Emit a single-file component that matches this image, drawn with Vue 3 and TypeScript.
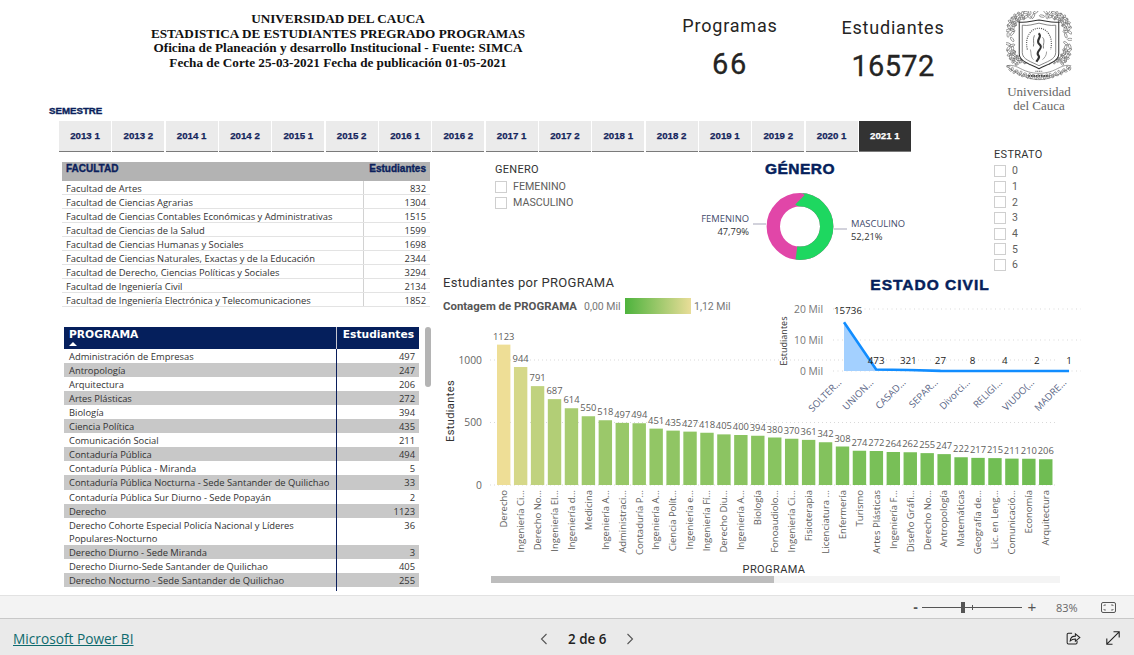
<script setup lang="ts">
const semesters = ["2013 1","2013 2","2014 1","2014 2","2015 1","2015 2","2016 1","2016 2","2017 1","2017 2","2018 1","2018 2","2019 1","2019 2","2020 1","2021 1"];

const faculties = [
  ["Facultad de Artes", 832],
  ["Facultad de Ciencias Agrarias", 1304],
  ["Facultad de Ciencias Contables Económicas y Administrativas", 1515],
  ["Facultad de Ciencias de la Salud", 1599],
  ["Facultad de Ciencias Humanas y Sociales", 1698],
  ["Facultad de Ciencias Naturales, Exactas y de la Educación", 2344],
  ["Facultad de Derecho, Ciencias Políticas y Sociales", 3294],
  ["Facultad de Ingeniería Civil", 2134],
  ["Facultad de Ingeniería Electrónica y Telecomunicaciones", 1852],
];

const programs = [
  ["Administración de Empresas", 497],
  ["Antropología", 247],
  ["Arquitectura", 206],
  ["Artes Plásticas", 272],
  ["Biología", 394],
  ["Ciencia Política", 435],
  ["Comunicación Social", 211],
  ["Contaduría Pública", 494],
  ["Contaduría Pública - Miranda", 5],
  ["Contaduría Pública Nocturna - Sede Santander de Quilichao", 33],
  ["Contaduría Pública Sur Diurno - Sede Popayán", 2],
  ["Derecho", 1123],
  ["Derecho Cohorte Especial Policía Nacional y Líderes Populares-Nocturno", 36],
  ["Derecho Diurno - Sede Miranda", 3],
  ["Derecho Diurno-Sede Santander de Quilichao", 405],
  ["Derecho Nocturno - Sede Santander de Quilichao", 255],
];

const barData: [string, number][] = [
  ["Derecho", 1123],["Ingeniería Ci...", 944],["Derecho No...", 791],["Ingeniería El...", 687],
  ["Ingeniería d...", 614],["Medicina", 550],["Ingeniería A...", 518],["Administraci...", 497],
  ["Contaduría P...", 494],["Ingeniería A...", 451],["Ciencia Polít...", 435],["Ingeniería e...", 427],
  ["Ingeniería Fí...", 418],["Derecho Diu...", 405],["Ingeniería A...", 400],["Biología", 394],
  ["Fonoaudiolo...", 380],["Ingeniería Ci...", 370],["Fisioterapia", 361],["Licenciatura ...", 342],
  ["Enfermería", 308],["Turismo", 274],["Artes Plásticas", 272],["Ingeniería F...", 264],
  ["Diseño Gráfi...", 262],["Derecho No...", 255],["Antropología", 247],["Matemáticas", 222],
  ["Geografía de...", 217],["Lic. en Leng...", 215],["Comunicació...", 211],["Economía", 210],["Arquitectura", 206],
];

function barColor(v: number) {
  const t = v / 1123;
  const a = [84, 182, 68];
  const b = [238, 222, 150];
  const c = a.map((x, i) => Math.round(x + (b[i] - x) * t));
  return `rgb(${c[0]},${c[1]},${c[2]})`;
}

const bars = barData.map(([label, value], i) => ({
  label,
  value,
  x: 57 + i * 16.94,
  h: value * 0.125,
  color: barColor(value),
}));

const civil: [string, number][] = [
  ["SOLTER...", 15736],["UNION...", 473],["CASAD...", 321],["SEPAR...", 27],
  ["Divorci...", 8],["RELIGI...", 4],["VIUDO(...", 2],["MADRE...", 1],
];
const civilPts = civil.map(([label, value], i) => ({
  label,
  value,
  x: 66 + i * 32.15,
  y: 93 - value * 0.0031,
}));
const civilLine = civilPts.map((p) => `${p.x},${p.y}`).join(" ");
const civilArea = `${civilPts[0].x},93 ${civilLine} ${civilPts[7].x},93`;

const estratos = [0, 1, 2, 3, 4, 5, 6];

// leaves of the crest wreath: two squarish rings around the shield
function squarish(v: number) {
  return Math.sign(v) * Math.pow(Math.abs(v), 0.62);
}
const leaves = Array.from({ length: 110 }, (_, i) => {
  const ring = i % 2;
  const a = (i / 110) * Math.PI * 2;
  const rx = ring ? 26.5 : 30.5;
  const ry = ring ? 23 : 27;
  const x = 32.5 + rx * squarish(Math.cos(a));
  const y = 28 + ry * squarish(Math.sin(a));
  return { x, y, r: i * 37 };
}).filter((l) => l.y < 52);

const ribbon = Array.from({ length: 30 }, (_, i) => {
  const x = 2 + i * 2.1;
  const d = (x - 32.5) / 30;
  return { x, y: 65 - 9 * d * d + (i % 2) * 2.2 - 1, r: i * 47 };
});
</script>

<template>
  <div class="page">
    <main class="canvas">
      <header class="top">
        <div class="heading">
          <p>UNIVERSIDAD DEL CAUCA</p>
          <p>ESTADISTICA DE ESTUDIANTES PREGRADO PROGRAMAS</p>
          <p>Oficina de Planeación y desarrollo Institucional - Fuente: SIMCA</p>
          <p>Fecha de Corte 25-03-2021 Fecha de publicación 01-05-2021</p>
        </div>
        <div class="kpi first">
          <div class="kpi-label">Programas</div>
          <div class="kpi-value">66</div>
        </div>
        <div class="kpi second">
          <div class="kpi-label">Estudiantes</div>
          <div class="kpi-value big">16572</div>
        </div>
        <div class="logo">
          <svg width="66" height="76" viewBox="0 0 65 75" fill="none" stroke="#666">
            <ellipse
              v-for="(l, i) in leaves"
              :key="i"
              :cx="l.x"
              :cy="l.y"
              rx="2.6"
              ry="1.1"
              stroke-width=".6"
              :transform="`rotate(${l.r} ${l.x} ${l.y})`"
            />
            <path d="M13 11 C20 12 24 10 32.5 9 C41 10 45 12 52 11 V42 C52 50 42 52 32.5 57 C23 52 13 50 13 42 Z" fill="#fff" stroke="#333" stroke-width="1" />
            <path d="M16 14 C22 15 27 13 32.5 12 C38 13 43 15 49 14 V41 C49 48 40 50 32.5 54 C25 50 16 48 16 41 Z" stroke="#555" stroke-width=".7" />
            <path d="M21 38 C18 25 25 17 32.5 17 C40 17 47 25 44 38" stroke="#555" stroke-width="1.1" stroke-dasharray="1.1 1" />
            <path d="M32 22 C37 25 28 29 33 33 C38 37 28 40 32 44 C34 46 31 48 30 50" stroke="#333" stroke-width="2.1" />
            <path d="M36 26 C39 29 36 33 37 37 M28 24 C26 28 28 31 27 35" stroke="#777" stroke-width=".9" />
            <path d="M24 38 C25 42 24 45 27 48 M40 40 C40 44 38 46 36 48" stroke="#888" stroke-width=".8" />
            <path d="M1 54 C9 52 14 58 22 60 C28 62 37 62 43 60 C51 58 56 52 64 54 C60 59 54 62 48 64 C38 69 27 69 17 64 C11 62 5 59 1 54 Z" fill="#fff" stroke="#777" stroke-width=".7" />
            <ellipse
              v-for="(r, i) in ribbon"
              :key="'r' + i"
              :cx="r.x"
              :cy="r.y"
              rx="1.7"
              ry=".9"
              stroke-width=".6"
              :transform="`rotate(${r.r} ${r.x} ${r.y})`"
            />
            <path d="M22 64 H43" stroke="#444" stroke-width="1.6" stroke-dasharray="1.5 1" />
            <path d="M29 59.5 H36" stroke="#555" stroke-width="1.1" stroke-dasharray="1 .7" />
          </svg>
          <div class="logo-text">Universidad<br />del Cauca</div>
        </div>
      </header>

      <div class="semester-title">SEMESTRE</div>
      <nav class="tabs">
        <div v-for="(s, i) in semesters" :key="s" class="tab" :class="{ active: i === semesters.length - 1 }">{{ s }}</div>
      </nav>

      <section class="body">
        <div class="left">
          <div class="faculty">
            <div class="faculty-head">
              <span>FACULTAD</span>
              <span>Estudiantes</span>
            </div>
            <div v-for="f in faculties" :key="f[0]" class="faculty-row">
              <span>{{ f[0] }}</span>
              <span class="num">{{ f[1] }}</span>
            </div>
          </div>

          <div class="program-wrap">
            <div class="program">
              <div class="program-head">
                <div class="program-name-head">
                  PROGRAMA
                  <svg class="sort" width="8" height="4" viewBox="0 0 8 4"><path d="M0 4 L4 0 L8 4 Z" fill="#fff" /></svg>
                </div>
                <div class="program-num-head">Estudiantes</div>
              </div>
              <div
                v-for="(p, i) in programs"
                :key="p[0]"
                class="program-row"
                :class="{ shade: i % 2 === 1, tall: i === 9 }"
              >
                <div class="program-name">{{ p[0] }}</div>
                <div class="program-num">{{ p[1] }}</div>
              </div>
              <div class="program-rest"></div>
            </div>
            <div class="vscroll"></div>
          </div>
        </div>

        <div class="right">
          <div class="upper">
            <div class="slicer genero">
              <div class="slicer-title">GENERO</div>
              <label class="check"><i></i>FEMENINO</label>
              <label class="check"><i></i>MASCULINO</label>
            </div>

            <div class="donut">
              <div class="chart-heading">GÉNERO</div>
              <svg width="240" height="100" viewBox="0 0 240 100">
                <circle cx="120" cy="57.5" r="26.7" fill="none" stroke="#e146a8" stroke-width="13.4" />
                <circle
                  cx="120"
                  cy="57.5"
                  r="26.7"
                  fill="none"
                  stroke="#1ed760"
                  stroke-width="13.4"
                  pathLength="100"
                  stroke-dasharray="52.21 47.79"
                  transform="rotate(-90 120 57.5)"
                />
                <path d="M73 55 H86 M154 60 H167" stroke="#a5a5b8" stroke-width="1" />
                <text class="donut-label" x="69" y="53" text-anchor="end">FEMENINO</text>
                <text class="donut-pct" x="69" y="66" text-anchor="end">47,79%</text>
                <text class="donut-label" x="171" y="58">MASCULINO</text>
                <text class="donut-pct" x="171" y="71">52,21%</text>
              </svg>
            </div>

            <div class="slicer estrato">
              <div class="slicer-title">ESTRATO</div>
              <label v-for="e in estratos" :key="e" class="check"><i></i>{{ e }}</label>
            </div>
          </div>

          <div class="bars-section">
            <div class="bars-title">Estudiantes por PROGRAMA</div>
            <div class="legend">
              <b>Contagem de PROGRAMA</b>
              <span class="legend-min">0,00 Mil</span>
              <span class="legend-grad"></span>
              <span>1,12 Mil</span>
            </div>

            <svg class="bars" width="640" height="249" viewBox="0 0 640 249">
              <g stroke="#d9d9d9" stroke-dasharray="1 3">
                <path d="M50 33 H616 M50 95.5 H616 M50 158 H616" />
              </g>
              <text class="tick" x="42" y="37" text-anchor="end">1000</text>
              <text class="tick" x="42" y="99" text-anchor="end">500</text>
              <text class="tick" x="42" y="162" text-anchor="end">0</text>
              <text class="axis-title" transform="translate(14 84) rotate(-90)" text-anchor="middle">Estudiantes</text>
              <g v-for="b in bars" :key="b.x">
                <rect :x="b.x" :y="158 - b.h" width="13.4" :height="b.h" :fill="b.color" />
                <text class="bar-value" :x="b.x + 6.7" :y="158 - b.h - 5" text-anchor="middle">{{ b.value }}</text>
                <text
                  class="bar-label"
                  :transform="`translate(${b.x + 10} 163) rotate(-90)`"
                  text-anchor="end"
                >{{ b.label }}</text>
              </g>
              <text class="axis-title" x="334" y="246" text-anchor="middle">PROGRAMA</text>
            </svg>
            <div class="hscroll"><div class="hscroll-thumb"></div></div>

            <div class="civil">
              <div class="chart-heading">ESTADO CIVIL</div>
              <svg width="310" height="140" viewBox="0 0 310 140">
                <g stroke="#d9d9d9" stroke-dasharray="1 3.5">
                  <path d="M55 31 H303 M55 62 H303 M55 93 H303" />
                </g>
                <text class="civil-tick" x="45" y="35" text-anchor="end">20 Mil</text>
                <text class="civil-tick" x="45" y="66" text-anchor="end">10 Mil</text>
                <text class="civil-tick" x="45" y="97" text-anchor="end">0 Mil</text>
                <text class="civil-axis" transform="translate(9 63) rotate(-90)" text-anchor="middle">Estudiantes</text>
                <polygon :points="civilArea" fill="#a3d0ff" />
                <polyline :points="civilLine" fill="none" stroke="#118dff" stroke-width="2.6" />
                <text
                  v-for="p in civilPts"
                  :key="p.label + 'v'"
                  class="civil-value"
                  :x="p.x + (p.value > 1000 ? 4 : 0)"
                  :y="p.value > 1000 ? 36 : 86"
                  text-anchor="middle"
                >{{ p.value }}</text>
                <text
                  v-for="p in civilPts"
                  :key="p.label"
                  class="civil-label"
                  :transform="`translate(${p.x - 2} 105) rotate(-45)`"
                  text-anchor="end"
                >{{ p.label }}</text>
              </svg>
            </div>
          </div>
        </div>
      </section>
    </main>

    <div class="status">
      <button class="zoom-btn">-</button>
      <div class="slider"><span class="notch"></span><span class="thumb"></span></div>
      <button class="zoom-btn plus">+</button>
      <span class="pct">83%</span>
      <svg class="fit" width="15" height="11" viewBox="0 0 15 11" fill="none" stroke="#555">
        <rect x=".5" y=".5" width="14" height="10" rx="1.5" />
        <path d="M3 4 V3 H5 M12 4 V3 H10 M3 7 V8 H5 M12 7 V8 H10" stroke-width=".8" />
      </svg>
    </div>

    <footer class="foot">
      <a class="brand" href="#">Microsoft Power BI</a>
      <div class="pager">
        <svg width="8" height="12" viewBox="0 0 8 12" fill="none" stroke="#555" stroke-width="1.1"><path d="M6.5 1 L1.5 6 L6.5 11" /></svg>
        <span>2 de 6</span>
        <svg width="8" height="12" viewBox="0 0 8 12" fill="none" stroke="#555" stroke-width="1.1"><path d="M1.5 1 L6.5 6 L1.5 11" /></svg>
      </div>
      <div class="foot-icons">
        <svg width="15" height="14" viewBox="0 0 15 15" fill="none" stroke="#222" stroke-width="1.1">
          <path d="M6 2.5 H2 C1.2 2.5 .7 3 .7 3.8 V12.7 C.7 13.5 1.2 14 2 14 H10 C10.8 14 11.3 13.5 11.3 12.7 V10.5" />
          <path d="M4 10.5 C4.2 7.5 6.5 5.5 9.5 5.5 V3 L14.3 7 L9.5 11 V8.5 C7.5 8.5 5.5 9 4 10.5 Z" />
        </svg>
        <svg width="14" height="14" viewBox="0 0 14 14" fill="none" stroke="#222" stroke-width="1.1">
          <path d="M.8 13.2 L13.2 .8 M7.5 .8 H13.2 V6.5 M.8 7.5 V13.2 H6.5" />
        </svg>
      </div>
    </footer>
  </div>
</template>

<style>
html,
body {
  margin: 0;
  background: #fff;
}
</style>

<style scoped>
.page {
  width: 1134px;
  height: 655px;
  display: flex;
  flex-direction: column;
  overflow: hidden;
  background: #fff;
  font-family: "Open Sans", "Noto Sans", sans-serif;
  color: #333;
}

.canvas {
  height: 595px;
  flex: none;
  overflow: hidden;
}

/* header */
.top {
  height: 104px;
  display: flex;
}

.heading {
  width: 396px;
  margin-left: 140px;
  padding-top: 12px;
  text-align: center;
  font-family: "Liberation Serif", serif;
  font-weight: bold;
  font-size: 13.2px;
  line-height: 14.7px;
  color: #111;
}

.heading p {
  margin: 0;
}

.kpi {
  width: 160px;
  text-align: center;
  font-family: Roboto, sans-serif;
  color: #252423;
}

.kpi.first {
  margin-left: 114px;
  padding-top: 15px;
}

.kpi.second {
  margin-left: 3px;
  padding-top: 17px;
}

.kpi-label {
  font-size: 18px;
  line-height: 22px;
  letter-spacing: 0.8px;
}

.kpi-value {
  margin-top: 11px;
  font-size: 29px;
  line-height: 32px;
  letter-spacing: 1.6px;
  -webkit-text-stroke: 0.3px #252423;
}

.kpi-value.big {
  margin-top: 11px;
  letter-spacing: 0.3px;
}

.logo {
  width: 78px;
  margin-left: 27px;
  padding-top: 11px;
  text-align: center;
}

.logo svg {
  display: block;
  margin: 0 auto;
}

.logo-text {
  margin-top: -2px;
  font-family: "Liberation Serif", serif;
  font-size: 13px;
  line-height: 14px;
  color: #666;
}

/* semester tabs */
.semester-title {
  margin-left: 49px;
  height: 17px;
  line-height: 14px;
  font-family: "Liberation Sans", sans-serif;
  font-size: 9.7px;
  font-weight: bold;
  color: #0b1f5c;
  -webkit-text-stroke: 0.4px #0b1f5c;
}

.tabs {
  display: flex;
  gap: 1.33px;
  margin-left: 59px;
  width: 853px;
}

.tab {
  width: 52px;
  height: 30px;
  line-height: 30px;
  text-align: center;
  background: #ebebeb;
  border-bottom: 1px solid #7a7a7a;
  font-family: "Liberation Sans", sans-serif;
  font-weight: bold;
  font-size: 9.7px;
  color: #14245c;
  -webkit-text-stroke: 0.25px #14245c;
}

.tab.active {
  background: #333;
  color: #fff;
  -webkit-text-stroke: 0.25px #fff;
}

/* body */
.body {
  display: flex;
}

.left {
  width: 440px;
  flex: none;
  padding-top: 10px;
}

.faculty {
  width: 368px;
  height: 145px;
  margin-left: 62px;
  overflow: hidden;
  font-size: 9.4px;
}

.faculty-head {
  display: flex;
  justify-content: space-between;
  height: 19px;
  padding: 1px 4px 0;
  box-sizing: border-box;
  background: #b3b3b3;
  font-family: "Liberation Sans", sans-serif;
  font-weight: bold;
  font-size: 10px;
  line-height: 11px;
  color: #0b1f5c;
  -webkit-text-stroke: 0.35px #0b1f5c;
}

.faculty-row {
  display: flex;
  justify-content: space-between;
  height: 14px;
  padding: 1px 4px 0;
  box-sizing: border-box;
  line-height: 13px;
  border-bottom: 1px solid #e3e3e3;
  background: linear-gradient(#d2d2d2, #d2d2d2) 301px 0 / 1px 100% no-repeat;
  white-space: nowrap;
}

.program-wrap {
  position: relative;
  margin-top: 20px;
  margin-left: 64px;
  width: 367px;
}

.program {
  width: 355px;
  height: 264px;
  overflow: hidden;
  font-size: 9.4px;
}

.program-head {
  display: flex;
  height: 22px;
  background: #051f5c;
  color: #fff;
  font-family: "DejaVu Sans", sans-serif;
  font-weight: bold;
  font-size: 10.7px;
}

.program-name-head {
  position: relative;
  width: 273px;
  padding: 2px 0 0 5px;
  box-sizing: border-box;
  line-height: 12px;
  border-right: 1px solid #c6c6d0;
}

.sort {
  position: absolute;
  left: 5px;
  top: 15px;
}

.program-num-head {
  flex: 1;
  text-align: right;
  padding: 2px 5px 0 0;
  line-height: 12px;
  font-size: 10.7px;
  white-space: nowrap;
}

.program-row {
  display: flex;
  min-height: 14px;
  line-height: 13px;
}

.program-row.tall {
  min-height: 15px;
}

.program-row.shade {
  background: #c8c8c8;
}

.program-name {
  width: 273px;
  padding: 1px 6px 0 5px;
  box-sizing: border-box;
  border-right: 1px solid #0b1f5c;
}

.program-num {
  flex: 1;
  padding: 1px 4px 0 0;
  text-align: right;
}

.program-rest {
  height: 12px;
  width: 273px;
  box-sizing: border-box;
  border-right: 1px solid #0b1f5c;
}

.vscroll {
  position: absolute;
  top: 0;
  right: 0;
  width: 6px;
  height: 60px;
  border-radius: 3px;
  background: #b4b4b4;
}

.right {
  flex: 1;
  min-width: 0;
}

.upper {
  display: flex;
  height: 123px;
}

.slicer {
  font-size: 10px;
  color: #605e5c;
}

.slicer-title {
  font-family: Roboto, sans-serif;
  font-size: 11px;
  line-height: 14px;
  color: #333;
  letter-spacing: 0.3px;
}

.check {
  display: flex;
  align-items: center;
  gap: 6px;
  height: 15.7px;
}

.check i {
  display: block;
  width: 10px;
  height: 10px;
  border: 1px solid #cfcfcf;
  background: #fff;
}

.genero {
  margin-left: 55px;
  width: 185px;
  flex: none;
  padding-top: 11px;
}

.genero .slicer-title {
  margin-bottom: 2px;
}

.genero .check {
  font-family: Roboto, sans-serif;
  font-size: 10.7px;
}

.donut {
  width: 240px;
  flex: none;
  padding-top: 8px;
}

.donut svg {
  display: block;
  margin-top: -9px;
}

.chart-heading {
  text-align: center;
  font-family: "Liberation Sans", sans-serif;
  font-weight: bold;
  font-size: 15.5px;
  line-height: 18px;
  letter-spacing: 0.5px;
  color: #051f5c;
  -webkit-text-stroke: 0.5px #051f5c;
}

.donut-label {
  font-size: 9.4px;
  fill: #3f4b6b;
}

.donut-pct {
  font-size: 9.4px;
  fill: #333;
}

.estrato {
  margin-left: 74px;
  margin-top: -4px;
  flex: none;
}

.estrato .check {
  font-family: Roboto, sans-serif;
  font-size: 10.5px;
}

.estrato .slicer-title {
  margin-bottom: 2px;
  line-height: 13px;
}

/* charts */
.bars-section {
  position: relative;
}

.bars-title {
  margin-left: 3px;
  margin-top: 1px;
  height: 14px;
  font-family: Roboto, sans-serif;
  font-size: 13px;
  line-height: 14px;
  color: #333;
  letter-spacing: 0.3px;
}

.legend {
  display: flex;
  align-items: center;
  height: 16px;
  margin: 8px 0 0 3px;
  font-size: 10.5px;
  color: #777;
  font-family: Roboto, sans-serif;
}

.legend b {
  width: 141px;
  flex: none;
  color: #555;
  font-size: 11.4px;
  white-space: nowrap;
}

.legend-min {
  width: 41px;
  flex: none;
}

.legend-grad {
  width: 66px;
  height: 16px;
  margin-right: 3px;
  flex: none;
  background: linear-gradient(90deg, #4db33d, #e9dd98);
}

.bars {
  display: block;
  margin-top: 13px;
}

.tick {
  font-size: 10.3px;
  fill: #666;
}

.axis-title {
  font-family: Roboto, sans-serif;
  font-size: 11px;
  fill: #333;
  letter-spacing: 0.4px;
}

.bar-value {
  font-size: 9.4px;
  fill: #605e5c;
}

.bar-label {
  font-size: 9.5px;
  fill: #605e5c;
}

.hscroll {
  width: 569px;
  height: 7px;
  margin-left: 51px;
  background: #f4f4f4;
}

.hscroll-thumb {
  width: 283px;
  height: 100%;
  background: #bdbdbd;
}

.civil {
  position: absolute;
  left: 338px;
  top: 1px;
  width: 310px;
}

.civil .chart-heading {
  width: 304px;
  height: 16px;
  line-height: 16px;
  letter-spacing: 1px;
}

.civil svg {
  display: block;
  margin-top: -15px;
}

.civil-tick {
  font-size: 10.3px;
  fill: #777;
}

.civil-axis {
  font-size: 9px;
  fill: #333;
}

.civil-value {
  font-size: 9.8px;
  fill: #222;
}

.civil-label {
  font-size: 9.6px;
  fill: #5a6585;
}

/* bottom bars */
.status {
  height: 24px;
  flex: none;
  box-sizing: border-box;
  display: flex;
  align-items: center;
  padding-left: 912px;
  background: #f3f3f3;
  border-top: 1px solid #e2e2e2;
  border-bottom: 1px solid #c8c8c8;
  color: #555;
}

.zoom-btn {
  width: 7px;
  padding: 0;
  border: 0;
  background: none;
  font-family: "Liberation Sans", sans-serif;
  font-size: 14px;
  font-weight: bold;
  line-height: 14px;
  color: #555;
}

.zoom-btn.plus {
  margin-left: 4px;
  width: 12px;
  font-weight: normal;
  font-size: 15px;
}

.slider {
  position: relative;
  width: 100px;
  height: 1px;
  margin-left: 3px;
  background: #555;
}

.thumb {
  position: absolute;
  left: 39px;
  top: -5px;
  width: 4px;
  height: 11px;
  background: #555;
}

.notch {
  position: absolute;
  left: 50px;
  top: -2px;
  width: 1px;
  height: 5px;
  background: #555;
}

.pct {
  margin-left: 18px;
  font-size: 11px;
  color: #666;
}

.fit {
  margin-left: 23px;
}

.foot {
  flex: 1;
  position: relative;
  display: flex;
  align-items: center;
  padding-top: 2px;
  background: #eaeaea;
}

.brand {
  margin-left: 13px;
  font-size: 13.7px;
  color: #0f6a6e;
  text-decoration: underline;
}

.pager {
  position: absolute;
  left: 540px;
  top: 11px;
  display: flex;
  align-items: center;
  gap: 20px;
  font-size: 13.4px;
  font-weight: 600;
  color: #222;
}

.foot-icons {
  margin-left: auto;
  margin-right: 14px;
  display: flex;
  align-items: center;
  gap: 25px;
}
</style>
